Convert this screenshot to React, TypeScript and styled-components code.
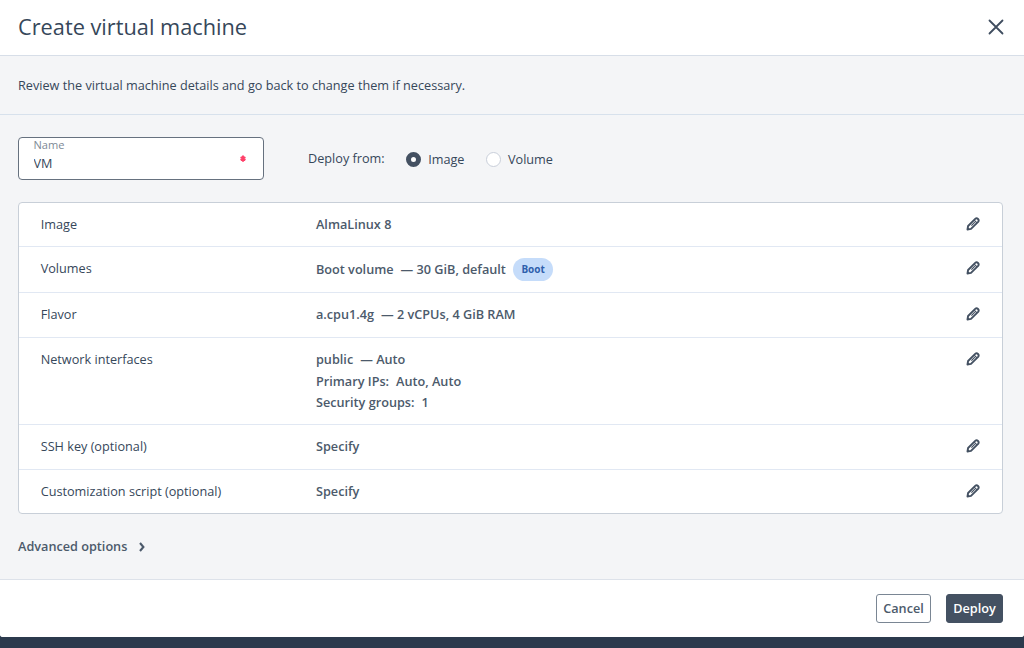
import React, { useState } from "react";
import styled, { createGlobalStyle } from "styled-components";

const Global = createGlobalStyle`
  * { box-sizing: border-box; }
  body {
    margin: 0;
    background: #2b3a4d;
    font-family: "Open Sans", "Noto Sans", sans-serif;
    font-size: 12.68px;
    line-height: 21.75px;
    color: #36475a;
  }
  button, input { font: inherit; color: inherit; }
`;

const Dialog = styled.main`
  width: 1024px;
  height: 637px;
  display: flex;
  flex-direction: column;
  background: #f4f5f7;
  border-radius: 0 0 3px 3px;
  overflow: hidden;
`;

const Header = styled.header`
  height: 56px;
  flex: none;
  display: flex;
  align-items: center;
  justify-content: space-between;
  padding: 0 20px 1px 18px;
  background: #fff;
  border-bottom: 1px solid #d7dee8;
`;

const Title = styled.h1`
  margin: 0;
  padding-bottom: 1px;
  font-size: 21.75px;
  line-height: 28px;
  font-weight: 400;
`;

const IconButton = styled.button`
  display: flex;
  padding: 0;
  border: 0;
  background: none;
  color: #3f4d5f;
`;

const Notice = styled.p`
  height: 59px;
  flex: none;
  margin: 0;
  display: flex;
  align-items: center;
  padding: 1px 18px 0;
  border-bottom: 1px solid #d7e1ec;
`;

const Body = styled.div`
  flex: 1;
  padding: 22px 21px 0 18px;
`;

const Controls = styled.div`
  display: flex;
  align-items: center;
  height: 43px;
`;

const Field = styled.label`
  width: 246px;
  height: 43px;
  display: flex;
  align-items: center;
  padding: 0 17px 0 14.5px;
  background: #fff;
  border: 1px solid #66717f;
  border-radius: 4px;
`;

const FieldText = styled.span`
  flex: 1;
  display: flex;
  flex-direction: column;
  padding-bottom: 7px;
`;

const FieldLabel = styled.span`
  font-size: 11.1px;
  line-height: 15px;
  color: #7d8996;
`;

const FieldInput = styled.input`
  width: 100%;
  height: 22px;
  padding: 0;
  border: 0;
  outline: 0;
  background: none;
`;

const RadioGroup = styled.div`
  display: flex;
  align-items: center;
  margin-left: 44px;
`;

const GroupLabel = styled.span`
  margin-right: 21.5px;
`;

const Radio = styled.label`
  display: flex;
  align-items: center;
  gap: 7px;
  margin-right: 21.5px;
  padding-top: 2px;
`;

const Dot = styled.span<{ $on: boolean }>`
  width: 15px;
  height: 15px;
  border-radius: 50%;
  background: #fff;
  border: ${(p) => (p.$on ? "5px solid #445162" : "1px solid #c9cfda")};
`;

const Table = styled.section`
  margin-top: 22px;
  background: #fff;
  border: 1px solid #c8cfd8;
  border-radius: 4px;
`;

const Row = styled.div<{ $height: number }>`
  height: ${(p) => p.$height}px;
  display: grid;
  grid-template-columns: 275.3px 1fr auto;
  align-items: start;
  padding: 11px 22px 0 21.7px;
  & + & { border-top: 1px solid #e1e8f3; }
  & ${IconButton} { margin-top: 3px; }
`;

const Value = styled.div`
  font-weight: 600;
  line-height: 21.6px;
  color: #4c5a6b;
`;

const Line = styled.div`
  display: flex;
  align-items: center;
  gap: 7px;
`;

const Badge = styled.span`
  height: 23px;
  display: flex;
  align-items: center;
  padding: 0 8.5px;
  border-radius: 12px;
  background: #c5dcfa;
  color: #2f5fac;
  font-size: 9.97px;
  font-weight: 700;
`;

const Advanced = styled.button`
  display: flex;
  align-items: center;
  gap: 12px;
  margin-top: 22px;
  padding: 0;
  border: 0;
  background: none;
  font-weight: 600;
  color: #4c5a6b;
`;

const Footer = styled.footer`
  height: 58px;
  flex: none;
  display: flex;
  align-items: center;
  justify-content: flex-end;
  gap: 15px;
  padding: 0 21px;
  background: #fff;
  border-top: 1px solid #dde2ea;
`;

const Button = styled.button<{ $primary?: boolean; $width: number }>`
  width: ${(p) => p.$width}px;
  height: 29px;
  padding: 1px 0 0;
  border: 1px solid ${(p) => (p.$primary ? "#445162" : "#7a8694")};
  border-radius: 3px;
  background: ${(p) => (p.$primary ? "#445162" : "#fff")};
  color: ${(p) => (p.$primary ? "#fff" : "#4c5a6b")};
  font-weight: 600;
`;

const Pencil = () => (
  <svg width="14" height="14" viewBox="0 0 14 14" fill="none" stroke="#445162" strokeWidth="1.9" strokeLinejoin="round">
    <path d="M1.5 12.5 L2.1 9 L9.2 1.9 Q10.6 0.7 12 2 Q13.3 3.4 12.1 4.8 L5 11.9 Z" />
    <path d="M8.2 3.1 L10.9 5.8 M5.4 8.6 L8.8 5.2" strokeWidth="1.2" />
  </svg>
);

const Star = () => (
  <svg width="6" height="7" viewBox="0 0 6 7" stroke="#ff4069" strokeWidth="1.9">
    <path d="M3 .5V6.7M.6 2.1L5.4 5.1M5.4 2.1L.6 5.1" />
  </svg>
);

const rows = [
  { label: "Image", height: 43, lines: [["AlmaLinux 8"]] },
  { label: "Volumes", height: 46, lines: [["Boot volume", "— 30 GiB, default"]], badge: "Boot" },
  { label: "Flavor", height: 45, lines: [["a.cpu1.4g", "— 2 vCPUs, 4 GiB RAM"]] },
  {
    label: "Network interfaces",
    height: 87,
    lines: [["public", "— Auto"], ["Primary IPs:", "Auto, Auto"], ["Security groups:", "1"]],
  },
  { label: "SSH key (optional)", height: 45, lines: [["Specify"]] },
  { label: "Customization script (optional)", height: 44, lines: [["Specify"]] },
];

export default function App() {
  const [name, setName] = useState("VM");
  const [source, setSource] = useState("Image");
  return (
    <>
      <Global />
      <Dialog>
        <Header>
          <Title>Create virtual machine</Title>
          <IconButton aria-label="Close">
            <svg width="16" height="16" viewBox="0 0 16 16" stroke="currentColor" strokeWidth="1.8" strokeLinecap="round">
              <path d="M1.5 1.5L14.5 14.5M14.5 1.5L1.5 14.5" />
            </svg>
          </IconButton>
        </Header>
        <Notice>Review the virtual machine details and go back to change them if necessary.</Notice>
        <Body>
          <Controls>
            <Field>
              <FieldText>
                <FieldLabel>Name</FieldLabel>
                <FieldInput value={name} onChange={(e) => setName(e.target.value)} />
              </FieldText>
              <Star />
            </Field>
            <RadioGroup>
              <GroupLabel>Deploy from:</GroupLabel>
              {["Image", "Volume"].map((s) => (
                <Radio key={s} onClick={() => setSource(s)}>
                  <Dot $on={s === source} />
                  {s}
                </Radio>
              ))}
            </RadioGroup>
          </Controls>
          <Table>
            {rows.map((r) => (
              <Row key={r.label} $height={r.height}>
                <span>{r.label}</span>
                <Value>
                  {r.lines.map((line) => (
                    <Line key={line[0]}>
                      {line.map((part) => (
                        <span key={part}>{part}</span>
                      ))}
                      {r.badge && <Badge>{r.badge}</Badge>}
                    </Line>
                  ))}
                </Value>
                <IconButton aria-label={`Edit ${r.label}`}>
                  <Pencil />
                </IconButton>
              </Row>
            ))}
          </Table>
          <Advanced>
            Advanced options
            <svg width="6" height="10" viewBox="0 0 6 10" fill="none" stroke="currentColor" strokeWidth="2.1">
              <path d="M1 1L4.4 5L1 9" />
            </svg>
          </Advanced>
        </Body>
        <Footer>
          <Button $width={55}>Cancel</Button>
          <Button $width={57} $primary>Deploy</Button>
        </Footer>
      </Dialog>
    </>
  );
}
